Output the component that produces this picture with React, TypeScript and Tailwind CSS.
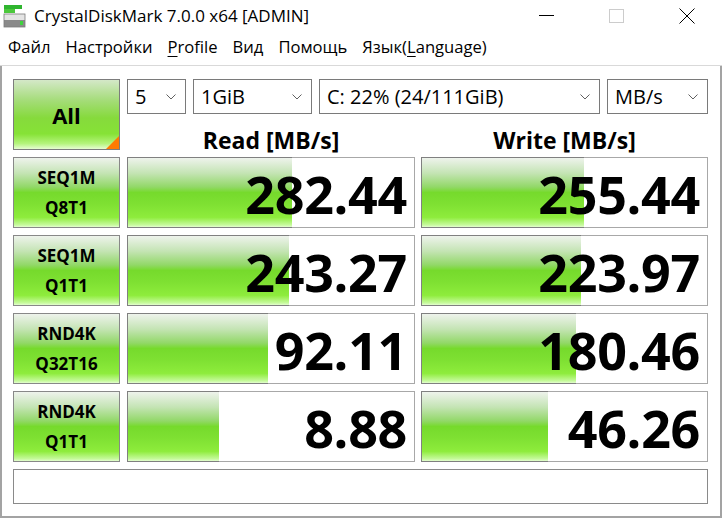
import React from "react";

const rows = [
  { a: "SEQ1M", b: "Q8T1", read: "282.44", rw: 165, write: "255.44", ww: 163 },
  { a: "SEQ1M", b: "Q1T1", read: "243.27", rw: 162, write: "223.97", ww: 160 },
  { a: "RND4K", b: "Q32T16", read: "92.11", rw: 141, write: "180.46", ww: 155 },
  { a: "RND4K", b: "Q1T1", read: "8.88", rw: 92, write: "46.26", ww: 127 },
];

const green =
  "bg-[linear-gradient(to_bottom,#eef3ec_0%,#c4e4b4_22%,#92d868_42%,#76da2c_50%,#7ee032_66%,#8eec3c_86%,#c6fa9c_97%,#e4fdd0_100%)]";

const Chevron = () => (
  <svg width="10" height="6" viewBox="0 0 10 6" className="shrink-0">
    <path d="M0.5 0.5 L5 5 L9.5 0.5" fill="none" stroke="#606060" strokeWidth="1" />
  </svg>
);

const Combo = ({ text, w }: { text: string; w: string }) => (
  <div className={`${w} h-[35px] border border-[#7a7a7a] bg-white flex items-center pl-[7px] pr-[9px]`}>
    <span className="flex-1 text-[20px] leading-none text-black whitespace-nowrap">{text}</span>
    <Chevron />
  </div>
);

const Value = ({ value, fill, w }: { value: string; fill: number; w: string }) => (
  <div className={`relative ${w} h-[71px] border border-[#a8a8a8] bg-white flex items-center justify-end pr-[7px] pt-[3px]`}>
    <div
      className={`absolute left-[-1px] top-[-1px] bottom-[-1px] border-y border-l border-[#808080] ${green}`}
      style={{ width: fill }}
    />
    <span className="relative text-[52px] font-bold leading-none text-black tracking-[-0.3px]">{value}</span>
  </div>
);

export default function App() {
  return (
    <div className="w-[722px] h-[518px] bg-white flex flex-col overflow-hidden font-['Open_Sans','Noto_Sans',sans-serif] text-black">
      {/* title bar */}
      <div className="h-[31px] flex items-center shrink-0">
        <svg width="24" height="24" viewBox="0 0 24 24" className="ml-[3px]">
          <rect x="1" y="1" width="18" height="4" fill="#2fb52f" />
          <rect x="1" y="5" width="11" height="4" fill="#4cc83c" />
          <rect x="1" y="10" width="21" height="6" fill="#e4e4e4" />
          <rect x="1" y="16" width="21" height="7" fill="#8a8a8a" />
          <rect x="1" y="10" width="21" height="13" fill="none" stroke="#7a7a7a" strokeWidth="0.8" />
          <rect x="17" y="17" width="3" height="4" fill="#3fd23f" />
        </svg>
        <span className="ml-[7px] text-[17px] leading-none whitespace-nowrap">CrystalDiskMark 7.0.0 x64 [ADMIN]</span>
        <div className="ml-auto flex h-full">
          <div className="w-[70px] flex items-center justify-center">
            <div className="w-[15px] h-px bg-black" />
          </div>
          <div className="w-[70px] flex items-center justify-center">
            <div className="w-[15px] h-[14px] border border-[#cccccc]" />
          </div>
          <div className="w-[71px] flex items-center justify-center">
            <svg width="16" height="16" viewBox="0 0 16 16">
              <path d="M0.5 0.5 L15.5 15.5 M15.5 0.5 L0.5 15.5" stroke="#000" strokeWidth="1" />
            </svg>
          </div>
        </div>
      </div>

      {/* menu bar */}
      <div className="h-[35px] flex items-center gap-[15px] pl-[8px] pb-[2px] border-b border-[#d9d9d9] shrink-0 text-[16.6px] leading-none">
        <span>Файл</span>
        <span>Настройки</span>
        <span>
          <span className="underline underline-offset-[3px]">P</span>rofile
        </span>
        <span>Вид</span>
        <span>Помощь</span>
        <span>
          Язык(<span className="underline underline-offset-[3px]">L</span>anguage)
        </span>
      </div>

      {/* main */}
      <div className="flex-1 border-l-2 border-r-2 border-b-2 border-[#a3a3a3] pl-[11px] pt-[13px] flex flex-col gap-[7px]">
        <div className="flex h-[71px]">
          <div className="relative w-[107px] h-[71px] border border-[#7c7c7c] bg-[linear-gradient(to_bottom,#d4e8c8_0%,#a4dc78_30%,#86da3c_55%,#86e236_78%,#b4f47c_92%,#e6fdd2_100%)] flex items-center justify-center overflow-hidden">
            <span className="text-[22px] font-bold leading-none">All</span>
            <div className="absolute right-0 bottom-0 w-0 h-0 border-l-[13px] border-l-transparent border-b-[13px] border-b-[#ff7a00]" />
          </div>
          <div className="ml-[7px] flex flex-col">
            <div className="flex gap-[7px]">
              <Combo text="5" w="w-[59px]" />
              <Combo text="1GiB" w="w-[119px]" />
              <Combo text="C: 22% (24/111GiB)" w="w-[281px]" />
              <Combo text="MB/s" w="w-[101px]" />
            </div>
            <div className="flex pt-[15px] text-[23px] font-bold leading-[22px]">
              <div className="w-[288px] text-center">Read [MB/s]</div>
              <div className="ml-[6px] w-[287px] text-center">Write [MB/s]</div>
            </div>
          </div>
        </div>

        {rows.map((r, i) => (
          <div key={i} className="flex h-[71px]">
            <div className={`w-[107px] h-[71px] border border-[#888888] ${green} flex flex-col items-center justify-center text-[17px] font-bold leading-[30px]`}>
              <span>{r.a}</span>
              <span>{r.b}</span>
            </div>
            <div className="ml-[7px]">
              <Value value={r.read} fill={r.rw} w="w-[288px]" />
            </div>
            <div className="ml-[6px]">
              <Value value={r.write} fill={r.ww} w="w-[287px]" />
            </div>
          </div>
        ))}

        <div className="w-[695px] h-[35px] border border-[#8a8a8a] bg-white" />
      </div>
    </div>
  );
}
